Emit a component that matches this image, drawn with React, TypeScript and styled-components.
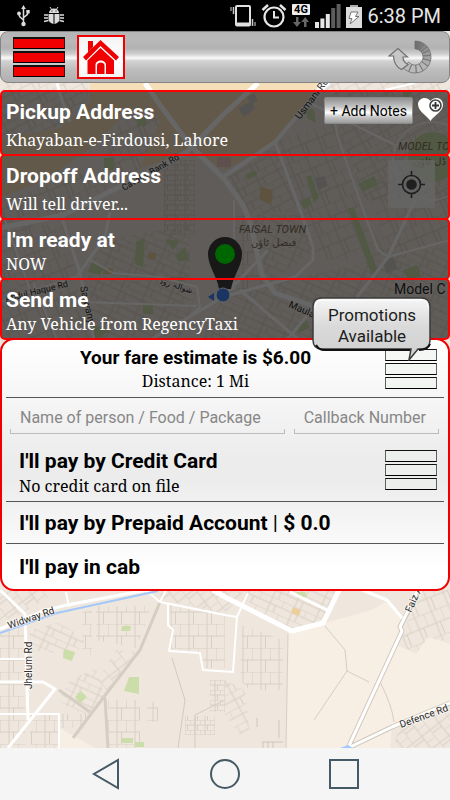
import React from "react";
import styled, { createGlobalStyle, css } from "styled-components";

const RED = "#f00000";
const SANS = `Roboto, "Liberation Sans", sans-serif`;
const SERIF = `"Noto Serif", "Droid Serif", "Liberation Serif", serif`;

const GlobalStyle = createGlobalStyle`
  *, *::before, *::after { box-sizing: border-box; }
  body { margin: 0; font-family: ${SANS}; background: #f5f5f5; color: #000; }
  button { font: inherit; color: inherit; background: none; border: 0; padding: 0; text-align: left; cursor: pointer; }
  svg { display: block; flex: none; }
`;

const Screen = styled.div`
  min-height: 100vh;
  display: flex;
  flex-direction: column;
`;

const StatusBar = styled.header`
  height: 31px;
  flex: none;
  background: #000;
  color: #e6e6e6;
  display: flex;
  align-items: center;
  justify-content: space-between;
  padding: 0 9px 0 17px;
`;

const StatusGroup = styled.div<{ $gap: number }>`
  display: flex;
  align-items: center;
  gap: ${(p) => p.$gap}px;
`;

const Clock = styled.time`
  font-size: 20px;
  line-height: 24px;
  white-space: nowrap;
`;

const Main = styled.main`
  flex: 1;
  position: relative;
  overflow: hidden;
  display: flex;
  flex-direction: column;
`;

const MapLayer = styled.div`
  position: absolute;
  inset: 0;
  & > svg { width: 100%; height: 100%; }
`;

const LocateButton = styled.button`
  position: absolute;
  top: 129px;
  right: 15px;
  width: 47px;
  height: 48px;
  display: grid;
  place-items: center;
  background: rgba(255, 255, 255, 0.75);
  border-radius: 2px;
`;

const Content = styled.div`
  position: relative;
  display: flex;
  flex-direction: column;
`;

const metal = css`
  background: linear-gradient(#b4b4b4 0%, #b8b8b8 18%, #b2b2b2 32%, #cfcfcf 44%, #fafafa 52%, #d2d2d2 58%, #bdbdbd 75%, #b0b0b0 100%);
`;

const AppBar = styled.nav`
  ${metal}
  height: 52px;
  border: 1px solid #858585;
  border-radius: 8px;
  display: flex;
  align-items: center;
  padding: 0 15px 0 12px;
  margin-bottom: 7px;
`;

const HomeButton = styled.button`
  width: 48px;
  height: 44px;
  margin-left: 12px;
  display: grid;
  place-items: center;
  border: 2px solid ${RED};
  background: linear-gradient(#f4f4f4, #fff 60%, #f4f4f4);
`;

const RefreshButton = styled.button`
  margin-left: auto;
`;

const TripRow = styled.section`
  display: flex;
  align-items: flex-start;
  border: 2px solid #ff0000;
  border-radius: 5px;
  background: rgba(0, 0, 0, 0.6);
  color: #fff;
  padding: 5px 5px 4px 4px;
  & + & { margin-top: -2px; }
`;

const TripButton = styled.button<{ $gap: number }>`
  flex: 1;
  min-width: 0;
  display: flex;
  flex-direction: column;
  padding-top: 2px;
  gap: ${(p) => p.$gap}px;
`;

const Title = styled.span`
  font-weight: 700;
  font-size: 21px;
  line-height: 26px;
`;

const Detail = styled.span`
  font-family: ${SERIF};
  font-size: 16px;
  line-height: 20px;
`;

const NotesButton = styled.button`
  height: 27px;
  padding: 0 5px;
  border-radius: 2px;
  border: 1px solid #8a8a8a;
  background: linear-gradient(#8f8f8f, #c4c4c4 35%, #fff 58%, #c8c8c8 75%, #9a9a9a);
  color: #000;
  font-size: 14px;
  line-height: 24px;
  white-space: nowrap;
`;

const HeartButton = styled.button`
  margin-left: 5px;
`;

const Panel = styled.section`
  margin-top: -2px;
  border: 2px solid ${RED};
  border-radius: 14px;
  background: linear-gradient(#fff 0%, #ececec 48%, #ececec 56%, #fff 92%);
  padding: 0 4px;
  display: flex;
  flex-direction: column;
`;

const PanelRow = styled.div<{ $height: number; $top?: number; $last?: boolean }>`
  position: relative;
  min-height: ${(p) => p.$height}px;
  display: flex;
  align-items: center;
  border-bottom: ${(p) => (p.$last ? "0" : "1px solid #555")};
  padding-top: ${(p) => p.$top ?? 0}px;
  padding-right: 7px;
`;

const Fare = styled.div`
  flex: 1;
  display: flex;
  flex-direction: column;
  align-items: center;
`;

const FareTotal = styled.strong`
  font-size: 19px;
  line-height: 24px;
`;

const FareDistance = styled.span`
  font-family: ${SERIF};
  font-size: 16px;
  line-height: 22px;
`;

const Bubble = styled.button`
  position: absolute;
  top: -43px;
  right: 12px;
  width: 120px;
  height: 64px;
  & > svg { position: absolute; inset: 0; }
`;

const BubbleText = styled.span`
  position: relative;
  display: block;
  height: 64px;
  padding-top: 8px;
  text-align: center;
  font-size: 17px;
  line-height: 21px;
  color: #1c1c1c;
`;

const Fields = styled.form`
  display: grid;
  grid-template-columns: 274fr 145fr;
  gap: 9px;
  padding: 4px 5px 0 4px;
`;

const Field = styled.input`
  min-width: 0;
  width: 100%;
  height: 32px;
  padding: 0 10px;
  border: 0;
  outline: 0;
  font: 400 16px/32px ${SANS};
  color: #222;
  background:
    linear-gradient(#bcbcbc, #bcbcbc) left bottom / 1px 5px no-repeat,
    linear-gradient(#bcbcbc, #bcbcbc) right bottom / 1px 5px no-repeat,
    linear-gradient(#bcbcbc, #bcbcbc) left bottom / 100% 1px no-repeat;
  &::placeholder { color: #878787; opacity: 1; }
`;

const PayButton = styled.button<{ $top?: number }>`
  flex: 1;
  display: flex;
  flex-direction: column;
  gap: 2px;
  padding-top: ${(p) => p.$top ?? 0}px;
  padding-left: 13px;
`;

const Divider = styled.span`
  font-weight: 400;
`;

const MenuButton = styled.button`
  display: flex;
  flex-direction: column;
  gap: 2px;
`;

const Bar = styled.span<{ $tone: "red" | "plain" }>`
  width: 52px;
  height: 12px;
  border: 1px solid ${(p) => (p.$tone === "red" ? "#3a1010" : "#5c625c")};
  border-top: ${(p) => (p.$tone === "red" ? "2px solid #111" : "1px solid #111")};
  border-bottom-color: #000;
  background: ${(p) => (p.$tone === "red" ? RED : "rgba(236, 242, 236, 0.5)")};
`;

const SystemNav = styled.nav`
  height: 52px;
  flex: none;
  display: flex;
  justify-content: center;
  background: #f5f5f5;
`;

const NavKey = styled.button`
  width: 119px;
  display: grid;
  place-items: center;
`;

const Bars = ({ tone }: { tone: "red" | "plain" }) => (
  <>
    <Bar $tone={tone} />
    <Bar $tone={tone} />
    <Bar $tone={tone} />
  </>
);

const UsbIcon = () => (
  <svg width="13" height="22" viewBox="0 0 13 22" fill="none" stroke="#dcdcdc" strokeWidth="1.5">
    <path d="M6.500 3v15M6.500 15.500C6 13 2 13.500 2 9.500M6.500 13C7 11 11 11 11 7.500" />
    <path d="M6.500 0l2.300 4H4.200z" fill="#dcdcdc" stroke="none" />
    <circle cx="6.500" cy="19" r="2.200" fill="#dcdcdc" stroke="none" />
    <circle cx="2" cy="8.500" r="1.900" fill="#dcdcdc" stroke="none" />
    <rect x="9.300" y="5" width="3.400" height="3.400" fill="#dcdcdc" stroke="none" />
  </svg>
);

const BugIcon = () => (
  <svg width="20" height="18" viewBox="0 0 20 18" fill="#dcdcdc">
    <path d="M5 6a5 4.500 0 0 1 10 0z" />
    <path d="M6 0l2 3M14 0l-2 3" stroke="#dcdcdc" />
    <path d="M4.500 7h5v10C6.500 16.500 4.500 14.500 4.500 12zM10.500 7h5v5c0 2.500-2 4.500-5 5z" />
    <path d="M0 8h4M0 11h4M0 14.500L4.500 13.500M20 8h-4M20 11h-4M20 14.500l-4.500-1" stroke="#dcdcdc" strokeWidth="1.300" />
    <path d="M8 3.500v1M12 3.500v1" stroke="#000" />
  </svg>
);

const VibrateIcon = () => (
  <svg width="26" height="24" viewBox="0 0 26 24" fill="none">
    <rect x="6" y="2" width="14" height="19.500" rx="1" stroke="#e0e0e0" strokeWidth="2" />
    <path d="M6 20h14" stroke="#e0e0e0" strokeWidth="3" />
    <path d="M3.500 3v7M22.500 15v7" stroke="#c8c8c8" strokeWidth="1.500" />
    <path d="M1 3v4M25 18v4" stroke="#909090" strokeWidth="1.500" />
  </svg>
);

const AlarmIcon = () => (
  <svg width="26" height="25" viewBox="0 0 26 25" fill="none" stroke="#e6e6e6">
    <circle cx="13" cy="14" r="9.500" strokeWidth="2.200" />
    <path d="M13 8v6.500h5" strokeWidth="2" />
    <path d="M1.500 7l5.500-5M24.500 7L19 2" strokeWidth="2.500" />
  </svg>
);

const NetworkIcon = () => (
  <svg width="18" height="24" viewBox="0 0 18 24">
    <rect width="18" height="11" rx="1" fill="#eee" />
    <text x="9" y="9" textAnchor="middle" fontFamily="Roboto" fontWeight="700" fontSize="11" fill="#000">4G</text>
    <path d="M4 13h2.500v5H9l-4 5-4-5h3zM12 23h2.500v-5H17l-3.800-5-4 5H12z" fill="#666" />
  </svg>
);

const SignalIcon = () => (
  <svg width="26" height="24" viewBox="0 0 26 24" fill="#e6e6e6">
    <path d="M0 18h4v6H0zM5.400 14.500h4V24h-4zM10.800 10h4v14h-4z" />
    <path d="M16.200 4h4v20h-4zM21.600 0h4v24h-4z" fill="#5c5c5c" />
  </svg>
);

const BatteryIcon = () => (
  <svg width="16" height="24" viewBox="0 0 16 24">
    <path d="M4 1h8v2H4z" fill="#aaa" />
    <path d="M0 3h16v21H0z" fill="#dcdcdc" />
    <path d="M5 8h7l-2.500 4.500H13L4 20l2-5.500H3z" fill="#fff" stroke="#777" />
  </svg>
);

const HomeIcon = () => (
  <svg width="36" height="36" viewBox="0 0 36 36" fill={RED}>
    <path d="M5 2h5v6l-5 5zM17.500 1L36 18l-3 3.500L17.500 7 3 21.500 0 18z" />
    <path d="M17.500 9L31 21.500V35h-8v-9c0-6-10.500-6-10.500 0v9h-8V21.500z" />
    <path d="M14 35v-8.500c0-4 7.500-4 7.500 0V35z" />
  </svg>
);

const RefreshIcon = () => {
  const point = (r: number, deg: number) => {
    const a = (deg * Math.PI) / 180;
    return `${(27 + r * Math.sin(a)).toFixed(1)} ${(17 - r * Math.cos(a)).toFixed(1)}`;
  };
  const steps = [0, 6, 14, 24, 36, 50, 66, 84, 104, 126, 150, 176, 204, 232];
  return (
    <svg width="46" height="34" viewBox="0 0 46 34" stroke="#707070">
      {steps.slice(0, -1).map((from, i) => {
        const to = steps[i + 1] - 1;
        const shade = Math.min(186, 100 + i * 9);
        return (
          <path
            key={from}
            d={`M${point(16, from)}A16 16 0 0 1 ${point(16, to)}L${point(8, to)}A8 8 0 0 0 ${point(8, from)}z`}
            fill={`rgb(${shade},${shade},${shade})`}
            strokeWidth="0.800"
          />
        );
      })}
      <path d="M1 16L10 8.500 19.500 17h-4.500c0 3 2 6 5 7.500l-6.500 5C8 27 5.500 21 5.500 16z" fill="#c6c6c6" strokeWidth="1.200" />
    </svg>
  );
};

const HeartIcon = () => (
  <svg width="25" height="25" viewBox="0 0 25 25">
    <path d="M12.500 24C8 18 0 14 0 7.500 0 1 8.500-1.500 12.500 4 16-1 25 0 25 8c0 6.500-8.500 10-12.500 16z" fill="#fff" />
    <circle cx="17.500" cy="8.500" r="5.500" fill="#fff" stroke="#444" strokeWidth="1.600" />
    <path d="M17.500 5v7M14 8.500h7" stroke="#333" strokeWidth="1.800" />
  </svg>
);

const TargetIcon = () => (
  <svg width="27" height="27" viewBox="0 0 27 27" fill="none" stroke="#505050" strokeWidth="1.700">
    <circle cx="13.500" cy="13.500" r="9" />
    <circle cx="13.500" cy="13.500" r="4.500" fill="#505050" />
    <path d="M13.500 0v5M13.500 22v5M0 13.500h5M22 13.500h5" />
  </svg>
);

const BubbleShape = () => (
  <svg width="120" height="64" viewBox="0 0 120 64">
    <defs>
      <linearGradient id="bubble" x2="0" y2="1">
        <stop offset="0" stopColor="#f6f6f6" />
        <stop offset="0.450" stopColor="#dadada" />
        <stop offset="1" stopColor="#cfcfcf" />
      </linearGradient>
    </defs>
    <path
      d="M10 1h99q9 0 9 9v33q0 9-9 9h-3l-9 11 2-11H10q-9 0-9-9V10q0-9 9-9z"
      fill="url(#bubble)"
      stroke="#3b3b3b"
      strokeWidth="1.500"
    />
    <path d="M4 48q3 5 8 5h86M107 53q9 0 11-6" fill="none" stroke="#111" strokeWidth="2" />
    <path d="M3 10q0-7 8-7h97q8 0 8 7" fill="none" stroke="#fff" />
  </svg>
);

const lots = [
  { id: "g1", size: "11 8", turn: -28 },
  { id: "g2", size: "9 13", turn: -22 },
  { id: "g3", size: "12 7", turn: 24 },
  { id: "g4", size: "9 12", turn: 0 },
  { id: "g5", size: "8 11", turn: 52 },
  { id: "g6", size: "5 5", turn: 0 },
];

const CityMap = () => (
  <svg viewBox="0 31 450 717" preserveAspectRatio="xMidYMin slice" aria-hidden="true">
    <defs>
      {lots.map(({ id, size, turn }) => {
        const [w, h] = size.split(" ").map(Number);
        return (
          <pattern key={id} id={id} width={w * 2} height={h * 2} patternUnits="userSpaceOnUse" patternTransform={`rotate(${turn})`}>
            <path d={`M0 0H${w * 2}M0 ${h}H${w * 2}M0 0V${h}M${w} 0V${h * 2}M${w * 1.5} ${h}V${h * 2}`} fill="none" stroke="#d8d0c4" />
          </pattern>
        );
      })}
    </defs>
    <rect y="31" width="450" height="717" fill="#efe7de" />
    <path d="M90 31H340L320 83 293 120 273 143 225 170 195 152 140 168 160 122 150 108 122 118 88 150 45 180 0 198V140L60 128 90 102z" fill="#f4dfb8" />
    <path d="M288 632L325 623 372 610 387 601 402 620 397 645 416 654 428 637 450 644V703L392 727 390 748H286z" fill="#f7eee4" />
    <path d="M60 728L95 748H60z" fill="#f7eee4" />

    <path d="M0 83H88V102L55 128 0 143z" fill="url(#g1)" />
    <path d="M122 118L150 108 160 122 140 168 117 186 100 150z" fill="url(#g2)" />
    <path d="M30 192L80 172 115 190 63 215 0 225V200z" fill="url(#g2)" />
    <path d="M163 160H195V235H163z" fill="url(#g6)" />
    <path d="M106 240L190 225V305L115 273 92 262z" fill="url(#g3)" />
    <path d="M88 275L197 290 180 340H95z" fill="url(#g3)" />
    <path d="M0 225H62L80 273 30 290 0 280z" fill="url(#g2)" />
    <path d="M0 290L75 283 95 345H0z" fill="url(#g2)" />
    <path d="M275 142L335 122 365 215 388 257 313 260 297 210z" fill="url(#g2)" />
    <path d="M225 180L275 145 297 210 253 215z" fill="url(#g1)" />
    <path d="M250 215L268 285 223 297 236 215z" fill="url(#g4)" />
    <path d="M302 215L313 250 268 285 253 215z" fill="url(#g3)" />
    <path d="M365 180L450 180V240L388 257z" fill="url(#g2)" />
    <path d="M325 83H450V200H365L335 122z" fill="url(#g1)" />
    <path d="M268 285L388 257 450 245V345H200L223 297z" fill="url(#g3)" />
    <path d="M0 590H60L25 612 0 622z" fill="url(#g5)" />
    <path d="M0 634L25 622V748H0z" fill="url(#g4)" />
    <path d="M30 714H58V748H30z" fill="url(#g4)" />
    <path d="M30 630L60 622 85 640 75 655 28 650z" fill="url(#g3)" />
    <path d="M82 612L92 610V655H82zM96 606H152L136 648 96 640z" fill="url(#g4)" />
    <path d="M70 680L96 668 104 695 85 718 58 700z" fill="url(#g3)" />
    <path d="M116 650L136 652 108 692 98 680z" fill="url(#g5)" />
    <path d="M108 700H140V748H108zM147 702H158V722H147zM60 714H90L80 728H60z" fill="url(#g4)" />
    <path d="M170 604L225 616V668L203 668 200 652 171 649z" fill="url(#g4)" />
    <path d="M172 658L185 700 178 748M195 748V715L225 700" fill="none" stroke="#d3cabd" />
    <path d="M185 716H215V735H185zM210 680H225V712H210z" fill="url(#g6)" />
    <path d="M242 625L283 640V690H250L240 680z" fill="url(#g4)" />
    <path d="M225 680L245 690 250 735 240 735 225 715z" fill="url(#g1)" />
    <path d="M248 590H340L322 622 292 629 242 604z" fill="url(#g3)" />
    <path d="M150 588H246L225 614 165 600z" fill="url(#g5)" />
    <path d="M418 590H450V642L428 637 416 654 400 645z" fill="url(#g2)" />
    <path d="M398 729L450 708V748H394z" fill="url(#g5)" />
    <path d="M257 727V718M279 720V738M263 742V748M268 742V748M273 742V748M262 742H283" stroke="#cfc6b9" fill="none" />

    <g fill="#cbdda8">
      <circle cx="433" cy="157" r="25" />
      <path d="M104 158h10v12h-10zM137 117h9v9h-9zM306 177l5-2 8 23-5 4zM358 184l16-8 4 8-15 8zM245 175l10-5 2 5-9 5zM306 107l8 3 2 13-9-5zM300 202l9-5 3 7-8 5zM403 92h7v8h-7z" />
      <path d="M136 242l9-4-2 30-8-4zM165 239l15 2-7 9zM175 256l10-9 4 12-10 3zM92 262l12 5-4 8-12-3zM143 305h10v9h-10zM348 208l6 0 24 63-6 5zM403 270l14-5 4 12-13 3zM297 327l10-6 3 6-11 6zM170 277h15l-4 6zM90 325l20 5-14 10z" />
      <path d="M122 626h9l-1 5h-9zM64 649l11 3-3 9-9-3zM129 677h10v17l-15-3zM81 691l6 6-7 6-5-6zM122 738h11v5h-11zM135 742h9v5h-9zM296 592h9l2 5-8 0z" />
    </g>
    <path d="M293 607l8 3-2 6-8-3zM260 187l13 3-2 14-11-4zM148 253h8v6h-8zM103 268h10v6h-10z" fill="#ebcf9c" />
    <path d="M238 108l14-7 3 8-11 8zM247 97l7-4 4 7-7 4zM315 178l10-2 2 10-9 4zM383 262l10-5 5 12-12 4z" fill="#d4d0cc" />
    <path d="M217 157h14v10h-14z" fill="#e8c8c4" />
    <circle cx="432" cy="161" r="39" fill="none" stroke="#faf7f2" strokeWidth="2" />

    <g fill="none" stroke="#d6cec2" strokeWidth="3">
      <path d="M160 602L140 650 103 698 73 738M105 698L108 748M59 690L90 712" />
      <path d="M325 626L345 650 347 671 314 720M347 671L369 682M380 682Q392 705 394 722M288 634L286 748" strokeWidth="1" />
    </g>
    <path d="M418 592L400 627 402 631 348 748 392 727 450 703" fill="none" stroke="#cfc7bc" strokeWidth="5" strokeLinejoin="round" />
    <g fill="none" stroke="#fff" strokeLinejoin="round">
      <path d="M145 83L160 105 190 145 225 180 243 205 250 222 262 275 275 293 313 306 360 340" strokeWidth="5" />
      <path d="M325 83L292 122 275 142 223 177" strokeWidth="4" />
      <path d="M258 83L225 113 187 152 117 188 63 215 0 228" strokeWidth="5" />
      <path d="M275 142L302 215 313 247V260L295 277 223 297 150 340" strokeWidth="3" />
      <path d="M330 83L308 102 395 145M335 122L337 135 365 215 378 250 388 257 450 240M385 90L415 83" strokeWidth="2" />
      <path d="M415 200L388 257 355 300 340 340M268 250L223 297M240 290L305 345M283 345L320 300" strokeWidth="3" />
      <path d="M57 83L62 100 70 122M110 212L105 237 78 275M60 212L80 273 90 320 95 345" strokeWidth="3" />
      <path d="M90 260L113 273 160 277 197 287 200 307 180 325M83 302L197 306M0 302L78 276M33 283L57 340M5 220L30 290M234 200V290" strokeWidth="2" />
      <path d="M0 629L43 611 67 605 147 590M0 590L25 614 28 720M0 682H43L55 689 8 748" strokeWidth="3" />
      <path d="M0 659H27M0 714H59V748M66 592L69 607M147 591L160 602 225 615 237 617M160 602L167 588M168 603V625L173 630 169 651 200 653 203 670 233 672 237 617 248 593" strokeWidth="2" />
      <path d="M213 590L225 597 292 631 323 623 340 588" strokeWidth="5" />
      <path d="M290 592L327 610M362 590L387 600 402 618M418 590L400 627 402 631 348 748 392 727 450 703" strokeWidth="3" />
    </g>
    <path d="M0 633L57 613 158 591" fill="none" stroke="#a5c8fa" strokeWidth="2" />
    <path d="M340 748l8-3 5 3z" fill="#a5c8fa" />

    <g fontFamily={SANS} fontSize="10" fill="#2c2a28" stroke="#fff" strokeWidth="2" strokeOpacity="0.500" paintOrder="stroke">
      <text transform="translate(300 120) rotate(-53)">Usmani Rd</text>
      <text transform="translate(124 191) rotate(-30)" fontSize="9">Cavalry Bank Rd</text>
      <text transform="translate(6 302) rotate(-14)" fontSize="9">Abdul Haque Rd</text>
      <text transform="translate(80 287) rotate(77)">Sarwany</text>
      <text transform="translate(288 307) rotate(23)">Maula</text>
      <text transform="translate(9 629) rotate(-19)">Widway Rd</text>
      <text transform="translate(32 689) rotate(-90)">Jhelum Rd</text>
      <text transform="translate(411 613) rotate(-65)">Faiz A</text>
      <text transform="translate(401 728) rotate(-20)">Defence Rd</text>
      <text x="159" y="283" fontFamily="DejaVu Sans" fontSize="8" transform="rotate(18 159 283)">شوالہ رود</text>
      <text x="394" y="294" fontSize="14">Model C</text>
    </g>
    <g fontFamily={SANS} fontSize="11" fill="#7d6e58" fontStyle="italic">
      <text x="239" y="233">FAISAL TOWN</text>
      <text x="398" y="150">MODEL TO</text>
      <text x="251" y="246" fontFamily="DejaVu Sans" fontStyle="normal" fontSize="10">فيصل ٹاؤن</text>
      <text x="413" y="165" fontFamily="DejaVu Sans" fontStyle="normal" fontSize="10">ڈل ٹاؤن</text>
    </g>

    <path d="M219 289C217 276 208 266 208 254a17 17 0 0 1 34 0c0 12-9 22-11 35z" fill="#3d3d3d" />
    <circle cx="225" cy="254" r="10" fill="#00ff00" />
    <circle cx="223" cy="295" r="7" fill="#4285f4" stroke="#fff" />
    <path d="M208 297l6-4v8z" fill="#4285f4" />
  </svg>
);

const trips = [
  { title: "Pickup Address", detail: "Khayaban-e-Firdousi, Lahore", gap: 5, tools: true },
  { title: "Dropoff Address", detail: "Will tell driver...", gap: 5 },
  { title: "I'm ready at", detail: "NOW", gap: 1 },
  { title: "Send me", detail: "Any Vehicle from RegencyTaxi", gap: 1 },
];

export default function App() {
  return (
    <Screen>
      <GlobalStyle />
      <StatusBar>
        <StatusGroup $gap={14}>
          <UsbIcon />
          <BugIcon />
        </StatusGroup>
        <StatusGroup $gap={5}>
          <VibrateIcon />
          <AlarmIcon />
          <NetworkIcon />
          <SignalIcon />
          <BatteryIcon />
          <Clock>6:38 PM</Clock>
        </StatusGroup>
      </StatusBar>

      <Main>
        <MapLayer>
          <CityMap />
          <LocateButton aria-label="My location">
            <TargetIcon />
          </LocateButton>
        </MapLayer>

        <Content>
          <AppBar>
            <MenuButton aria-label="Menu">
              <Bars tone="red" />
            </MenuButton>
            <HomeButton aria-label="Home">
              <HomeIcon />
            </HomeButton>
            <RefreshButton aria-label="Refresh">
              <RefreshIcon />
            </RefreshButton>
          </AppBar>

          {trips.map((trip) => (
            <TripRow key={trip.title}>
              <TripButton $gap={trip.gap}>
                <Title>{trip.title}</Title>
                <Detail>{trip.detail}</Detail>
              </TripButton>
              {trip.tools && (
                <>
                  <NotesButton>+ Add Notes</NotesButton>
                  <HeartButton aria-label="Add to favorites">
                    <HeartIcon />
                  </HeartButton>
                </>
              )}
            </TripRow>
          ))}

          <Panel>
            <PanelRow $height={58}>
              <Fare>
                <FareTotal>Your fare estimate is $6.00</FareTotal>
                <FareDistance>Distance: 1 Mi</FareDistance>
              </Fare>
              <MenuButton aria-label="Fare options">
                <Bars tone="plain" />
              </MenuButton>
              <Bubble>
                <BubbleShape />
                <BubbleText>
                  Promotions
                  <br />
                  Available
                </BubbleText>
              </Bubble>
            </PanelRow>
            <Fields>
              <Field aria-label="Name of person / Food / Package" placeholder="Name of person / Food / Package" />
              <Field aria-label="Callback Number" type="tel" placeholder="Callback Number" />
            </Fields>
            <PanelRow $height={68} $top={4}>
              <PayButton $top={4}>
                <Title>I'll pay by Credit Card</Title>
                <Detail>No credit card on file</Detail>
              </PayButton>
              <MenuButton aria-label="Credit card options">
                <Bars tone="plain" />
              </MenuButton>
            </PanelRow>
            <PanelRow $height={42}>
              <PayButton>
                <Title>
                  I'll pay by Prepaid Account <Divider>|</Divider> $ 0.0
                </Title>
              </PayButton>
            </PanelRow>
            <PanelRow $height={45} $last>
              <PayButton>
                <Title>I'll pay in cab</Title>
              </PayButton>
            </PanelRow>
          </Panel>
        </Content>
      </Main>

      <SystemNav>
        <NavKey aria-label="Back">
          <svg width="28" height="32" viewBox="0 0 28 32" fill="none" stroke="#455a64" strokeWidth="2">
            <path d="M26 2v28L2 16z" />
          </svg>
        </NavKey>
        <NavKey aria-label="Home screen">
          <svg width="32" height="32" viewBox="0 0 32 32" fill="none" stroke="#455a64" strokeWidth="2">
            <circle cx="16" cy="16" r="14" />
          </svg>
        </NavKey>
        <NavKey aria-label="Recent apps">
          <svg width="32" height="32" viewBox="0 0 32 32" fill="none" stroke="#455a64" strokeWidth="2">
            <path d="M2 2h28v28H2z" />
          </svg>
        </NavKey>
      </SystemNav>
    </Screen>
  );
}
